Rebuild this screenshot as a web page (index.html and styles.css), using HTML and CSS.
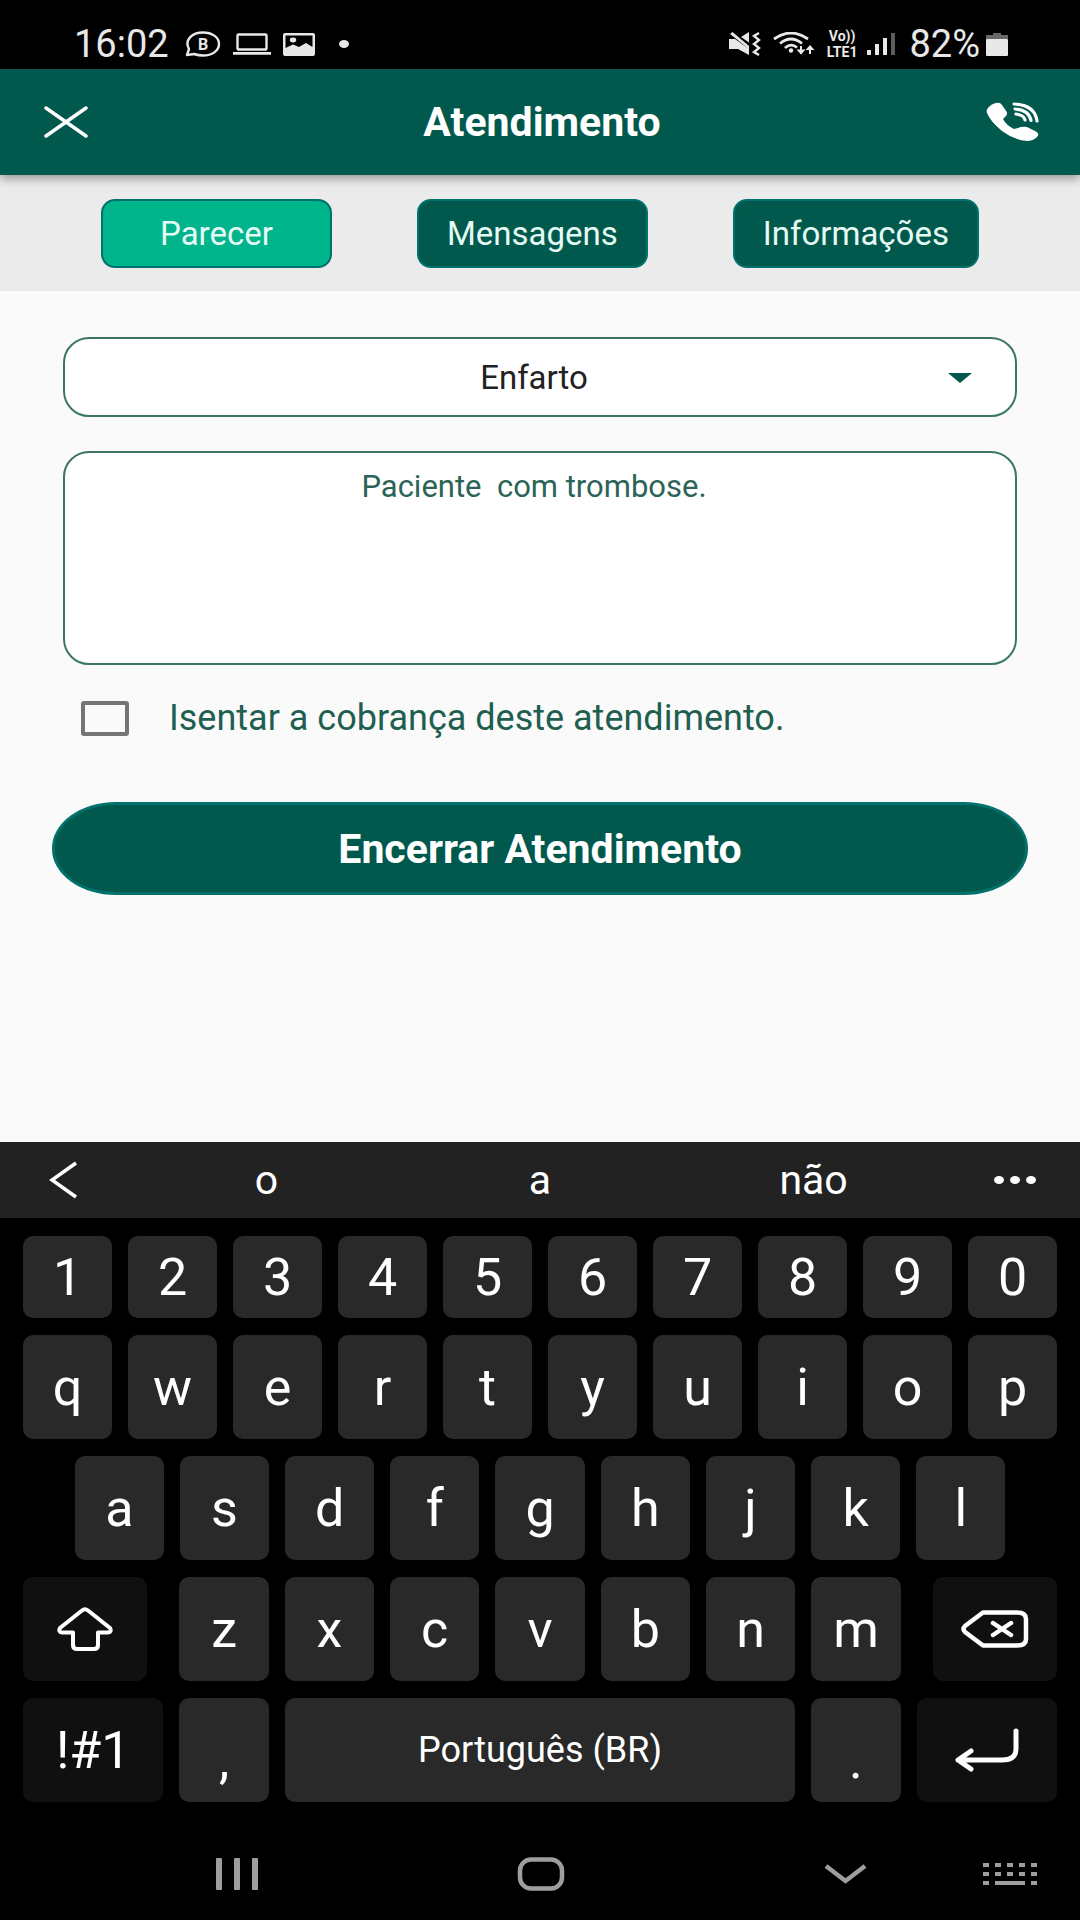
FILE: index.html
```html
<!DOCTYPE html>
<html lang="pt-BR">
<head>
    <meta charset="UTF-8">
    <meta name="viewport" content="width=device-width, initial-scale=1.0">
    <title>Atendimento</title>
    <link rel="stylesheet" href="styles.css">
</head>
<body>
    <div class="status-bar">
        <div class="status-left">
            <span class="status-text">16:02</span>
            <svg class="icon chat-icon" width="36" height="26" viewBox="0 0 36 26">
                <path d="M2 24 L4 18 C-1 9 7 1.500 18 1.500 C27 1.500 34 6 34 13 C34 20 27 24.500 18 24.500 C14 24.500 12 24 9 23 Z" fill="none" stroke="currentColor" stroke-width="2.400" stroke-linejoin="round"/>
                <text x="18" y="19" text-anchor="middle" fill="currentColor">B</text>
            </svg>
            <svg class="icon" width="38" height="22" viewBox="0 0 38 22" fill="none" stroke="currentColor" stroke-width="2.400">
                <rect x="4.500" y="1.500" width="29" height="15" rx="1"/>
                <path d="M0 20.300 H38" stroke-width="2.800"/>
            </svg>
            <svg class="icon" width="32" height="23" viewBox="0 0 32 23">
                <path fill="currentColor" fill-rule="evenodd" d="M2 0 H30 Q32 0 32 2 V21 Q32 23 30 23 H2 Q0 23 0 21 V2 Q0 0 2 0 Z M2.500 2.500 V15 L10 11.500 L16 14 L23 10 L29.500 14 V2.500 Z"/>
                <ellipse cx="10" cy="7" rx="3.200" ry="2.400" fill="currentColor"/>
            </svg>
            <span class="status-dot"></span>
        </div>
        <div class="status-right">
            <svg class="icon" width="32" height="24" viewBox="0 0 32 24">
                <path fill="currentColor" d="M0 7 H6 L20 17 V23 L9 17 H0 Z M12 5 L20 0 V10.500 Z M1 2 L3.500 0 L20 14 V17 Z"/>
                <path d="M30 1 L25 4 L30 8 L25 12 L30 16 L25 20 L30 23" fill="none" stroke="currentColor" stroke-width="2.400"/>
            </svg>
            <svg class="icon" width="42" height="24" viewBox="0 0 42 24" fill="none" stroke="currentColor" stroke-width="2.800">
                <path d="M1 7 Q18 -5 35 7 M7 11.500 Q18 2.500 29 11.500 M12 16 Q18 10.500 24 15.500"/>
                <circle cx="18" cy="18.500" r="2.200" fill="currentColor" stroke="none"/>
                <path d="M28 14 V22 M37 22 V14" stroke-width="2"/>
                <path d="M23.500 17.500 H32.500 L28 22.500 Z M32.500 18 H41.500 L37 13 Z" fill="currentColor" stroke="none"/>
            </svg>
            <span class="volte"><span>Vo))</span><span>LTE1</span></span>
            <svg class="icon signal" width="28" height="22" viewBox="0 0 28 22" fill="currentColor">
                <rect x="0" y="17" width="4" height="5"/>
                <rect x="8" y="11" width="4" height="11"/>
                <rect x="16" y="5" width="4" height="17"/>
                <rect x="24" y="0" width="4" height="22" opacity="0.4"/>
            </svg>
            <span class="status-text">82%</span>
            <svg class="icon battery" width="22" height="23" viewBox="0 0 22 23" fill="currentColor">
                <path d="M7 0 H15 V2 H22 V6 H0 V2 H7 Z" opacity="0.450"/>
                <rect x="0" y="6" width="22" height="17" rx="1"/>
            </svg>
        </div>
    </div>

    <header class="app-header">
        <button type="button" class="icon-btn" aria-label="Fechar">
            <svg class="icon" width="44" height="32" viewBox="0 0 44 32" fill="none" stroke="currentColor" stroke-width="3.500" stroke-linecap="round">
                <path d="M2 2 L42 30 M42 2 L2 30"/>
            </svg>
        </button>
        <h1>Atendimento</h1>
        <button type="button" class="icon-btn call-btn" aria-label="Ligar">
            <svg class="icon" width="54" height="40" viewBox="0 0 54 40">
                <path fill="currentColor" d="M2 6 Q5 2 10 1 Q14 0 16 3 L20.500 9.500 Q22 13 19 15 L17 17 Q20 23 28 27 L32 26 Q36 24 41 25 L50 29.500 Q54 32 51 35 Q47 39 41 39 Q28 38 16 29 Q4 19 1 11 Q0 8 2 6 Z"/>
                <path fill="none" stroke="currentColor" stroke-width="3.200" stroke-linecap="round" d="M28 2 Q49 3 51 19 M29 7 Q43 8 45 18.500 M30 12 Q38 13 39 18"/>
            </svg>
        </button>
    </header>

    <nav class="tabs">
        <button type="button" class="tab active">Parecer</button>
        <button type="button" class="tab">Mensagens</button>
        <button type="button" class="tab">Informações</button>
    </nav>

    <main class="content">
        <form class="parecer-form">
            <div class="select-wrap">
                <select id="diagnostico" name="diagnostico" aria-label="Diagnóstico">
                    <option>Enfarto</option>
                </select>
                <svg class="caret" width="24" height="10" viewBox="0 0 24 10"><path fill="currentColor" d="M0 0 H24 L12 10 Z"/></svg>
            </div>

            <textarea id="parecer" name="parecer" aria-label="Parecer" spellcheck="false">Paciente  com trombose.</textarea>

            <div class="check-row">
                <input type="checkbox" id="isentar" name="isentar">
                <label for="isentar">Isentar a cobrança deste atendimento.</label>
            </div>

            <button type="button" class="submit-btn">Encerrar Atendimento</button>
        </form>
    </main>

    <div class="suggestions">
        <button type="button" aria-label="Voltar">
            <svg class="icon" width="32" height="38" viewBox="0 0 32 38" fill="none" stroke="currentColor" stroke-width="3.500"><path d="M27 2 L3 19 L27 36"/></svg>
        </button>
        <button type="button">o</button>
        <button type="button">a</button>
        <button type="button">não</button>
        <button type="button" aria-label="Mais">
            <svg class="icon" width="42" height="10" viewBox="0 0 42 10" fill="currentColor"><ellipse cx="5" cy="5" rx="5" ry="4"/><ellipse cx="21" cy="5" rx="5" ry="4"/><ellipse cx="37" cy="5" rx="5" ry="4"/></svg>
        </button>
    </div>

    <div class="keyboard">
        <div class="row row-digits">
            <button type="button" class="key">1</button>
            <button type="button" class="key">2</button>
            <button type="button" class="key">3</button>
            <button type="button" class="key">4</button>
            <button type="button" class="key">5</button>
            <button type="button" class="key">6</button>
            <button type="button" class="key">7</button>
            <button type="button" class="key">8</button>
            <button type="button" class="key">9</button>
            <button type="button" class="key">0</button>
        </div>
        <div class="row">
            <button type="button" class="key">q</button>
            <button type="button" class="key">w</button>
            <button type="button" class="key">e</button>
            <button type="button" class="key">r</button>
            <button type="button" class="key">t</button>
            <button type="button" class="key">y</button>
            <button type="button" class="key">u</button>
            <button type="button" class="key">i</button>
            <button type="button" class="key">o</button>
            <button type="button" class="key">p</button>
        </div>
        <div class="row row-inset">
            <button type="button" class="key">a</button>
            <button type="button" class="key">s</button>
            <button type="button" class="key">d</button>
            <button type="button" class="key">f</button>
            <button type="button" class="key">g</button>
            <button type="button" class="key">h</button>
            <button type="button" class="key">j</button>
            <button type="button" class="key">k</button>
            <button type="button" class="key">l</button>
        </div>
        <div class="row">
            <button type="button" class="key key-fn key-shift" aria-label="Shift">
                <svg class="icon" width="56" height="44" viewBox="0 0 56 44" fill="none" stroke="currentColor" stroke-width="4" stroke-linejoin="round">
                    <path d="M25 3.500 Q28 1 31 3.500 L53 21 Q55 25 51 25.500 H41 V38 Q41 42 37 42 H20 Q16 42 16 38 V25.500 H5 Q1 25 3 21 Z"/>
                </svg>
            </button>
            <button type="button" class="key">z</button>
            <button type="button" class="key">x</button>
            <button type="button" class="key">c</button>
            <button type="button" class="key">v</button>
            <button type="button" class="key">b</button>
            <button type="button" class="key">n</button>
            <button type="button" class="key">m</button>
            <button type="button" class="key key-fn key-backspace" aria-label="Apagar">
                <svg class="icon" width="68" height="38" viewBox="0 0 68 38" fill="none" stroke="currentColor" stroke-width="4.500" stroke-linejoin="round" stroke-linecap="round">
                    <path d="M22 2.500 H56 Q65 2.500 65 9 V29 Q65 35.500 56 35.500 H22 L4 22 Q1 19 4 16 Z M32 13 L50 25 M50 13 L32 25"/>
                </svg>
            </button>
        </div>
        <div class="row">
            <button type="button" class="key key-fn key-wide">!#1</button>
            <button type="button" class="key key-punct">,</button>
            <button type="button" class="key key-space">Português (BR)</button>
            <button type="button" class="key key-punct">.</button>
            <button type="button" class="key key-fn key-wide" aria-label="Enter">
                <svg class="icon" width="64" height="44" viewBox="0 0 64 44" fill="none" stroke="currentColor" stroke-width="5" stroke-linejoin="round" stroke-linecap="round">
                    <path d="M61 3 V21 Q61 32 47 32 H3 M16 23 L3 32 L16 41"/>
                </svg>
            </button>
        </div>
    </div>

    <nav class="system-nav">
        <button type="button" aria-label="Recentes">
            <svg class="icon" width="42" height="32" viewBox="0 0 42 32" fill="currentColor"><rect width="6" height="32" rx="1"/><rect x="18" width="6" height="32" rx="1"/><rect x="36" width="6" height="32" rx="1"/></svg>
        </button>
        <button type="button" aria-label="Início">
            <svg class="icon" width="48" height="34" viewBox="0 0 48 34" fill="none" stroke="currentColor" stroke-width="4.500"><rect x="3" y="2.500" width="42" height="29" rx="11"/></svg>
        </button>
        <button type="button" aria-label="Ocultar teclado">
            <svg class="icon" width="43" height="20" viewBox="0 0 43 20" fill="none" stroke="currentColor" stroke-width="4.500"><path d="M2 2 L21.500 17 L41 2"/></svg>
        </button>
        <button type="button" aria-label="Teclados">
            <svg class="icon" width="54" height="22" viewBox="0 0 54 22" fill="none" stroke="currentColor" stroke-width="4">
                <path d="M0 2 H54 M0 11 H54" stroke-dasharray="6 6"/>
                <path d="M0 20 H6 M12 20 H42 M48 20 H54"/>
            </svg>
        </button>
    </nav>
</body>
</html>
```
FILE: styles.css
```css
:root {
    --primary-color: #00594c;
    --active-color: #00b48c;
    --border-color: #3c7468;
    --button-border: #00716c;
    --background-color: #fafafa;
    --key-color: #292929;
    --key-fn-color: #101010;
}

* {
    box-sizing: border-box;
}

body {
    margin: 0;
    min-height: 100vh;
    display: flex;
    flex-direction: column;
    font-family: Roboto, 'Liberation Sans', sans-serif;
    background-color: var(--background-color);
}

button {
    font-family: inherit;
    border: none;
    padding: 0;
    background: none;
    color: inherit;
    cursor: pointer;
}

.icon {
    display: block;
    flex: none;
}

/* Status bar */
.status-bar {
    display: flex;
    justify-content: space-between;
    height: 69px;
    padding: 20px 72px 0 74px;
    background: #000;
    color: #e8e8e8;
}

.status-left,
.status-right {
    display: flex;
    align-items: center;
    height: 48px;
    gap: 12px;
}

.status-text {
    font-size: 38px;
    line-height: 48px;
}

.chat-icon {
    margin-left: 4px;
    font-size: 16px;
    font-weight: bold;
}

.status-dot {
    width: 10px;
    height: 8px;
    margin-left: 12px;
    border-radius: 50%;
    background: currentColor;
}

.volte {
    display: flex;
    flex-direction: column;
    align-items: center;
    font-size: 14px;
    font-weight: bold;
    line-height: 16px;
}

.signal {
    margin: 0 2px 0 -2px;
}

.battery {
    margin-left: -6px;
}

/* Header */
.app-header {
    position: relative;
    display: grid;
    grid-template-columns: 1fr auto 1fr;
    align-items: center;
    height: 106px;
    padding: 0 40px 0 44px;
    background: var(--primary-color);
    color: #fff;
    box-shadow: 0 3px 10px rgba(0, 0, 0, 0.4);
}

.app-header h1 {
    margin: 0;
    font-size: 41px;
    line-height: 48px;
}

.icon-btn {
    justify-self: start;
}

.call-btn {
    justify-self: end;
}

/* Tabs */
.tabs {
    display: flex;
    justify-content: space-between;
    padding: 24px 101px 23px;
    background: #ebebeb;
}

.tab {
    min-width: 231px;
    height: 69px;
    padding: 0 28px;
    border: 2px solid var(--button-border);
    border-radius: 14px;
    background: var(--primary-color);
    color: #e6faf5;
    font-size: 33px;
}

.tab.active {
    background: var(--active-color);
}

/* Form */
.content {
    flex: 1;
    padding: 46px 52px;
}

.parecer-form {
    display: flex;
    flex-direction: column;
}

.select-wrap {
    position: relative;
    margin: 0 11px 34px;
}

select,
textarea {
    display: block;
    width: 100%;
    border: 2px solid var(--border-color);
    border-radius: 26px;
    background: #fff;
    font-family: inherit;
    font-size: 33px;
    text-align: center;
    outline: none;
}

select {
    appearance: none;
    height: 80px;
    padding: 0 24px 0 12px;
    color: #222;
    text-align-last: center;
}

.caret {
    position: absolute;
    top: 36px;
    right: 45px;
    color: var(--primary-color);
    pointer-events: none;
}

textarea {
    width: auto;
    height: 214px;
    margin: 0 11px 36px;
    padding: 14px 24px 14px 12px;
    color: #2b6457;
    font-size: 31px;
    line-height: 40px;
    resize: none;
}

.check-row {
    display: flex;
    align-items: center;
    gap: 40px;
    margin: 0 29px 66px;
}

.check-row input {
    appearance: none;
    flex: none;
    width: 48px;
    height: 35px;
    margin: 0;
    border: 4px solid #757575;
    border-radius: 3px;
}

.check-row label {
    color: #1f5f51;
    font-size: 36px;
    line-height: 35px;
}

.submit-btn {
    height: 93px;
    border: 3px solid var(--button-border);
    border-radius: 64px / 46px;
    background: var(--primary-color);
    color: #fff;
    font-size: 41px;
    font-weight: bold;
}

/* Keyboard */
.suggestions {
    display: grid;
    grid-template-columns: 12% 1fr 1fr 1fr 12%;
    height: 76px;
    background: #222;
    color: #fff;
}

.suggestions button {
    display: flex;
    align-items: center;
    justify-content: center;
    font-size: 41px;
}

.keyboard {
    display: flex;
    flex-direction: column;
    gap: 17px;
    padding: 18px 23px 26px;
    background: #000;
    color: #fff;
}

.row {
    display: flex;
    gap: 16px;
    height: 104px;
}

.row-digits {
    height: 82px;
}

.row-inset {
    padding: 0 5%;
}

.key {
    display: flex;
    flex: 89 1 0;
    align-items: center;
    justify-content: center;
    min-width: 0;
    border-radius: 10px;
    background: var(--key-color);
    font-size: 52px;
}

.key-fn {
    flex-grow: 124;
    background: var(--key-fn-color);
}

.key-shift {
    margin-right: 16px;
}

.key-backspace {
    margin-left: 16px;
}

.key-wide {
    flex-grow: 140;
}

.key-punct {
    padding-top: 20px;
}

.key-space {
    flex-grow: 509;
    font-size: 36px;
}

/* Android navigation */
.system-nav {
    display: flex;
    align-items: center;
    height: 92px;
    padding: 0 43px 0 20%;
    background: #000;
    color: #9e9e9e;
}

.system-nav button {
    margin-right: 24vw;
}

.system-nav button:nth-child(3) {
    margin-right: auto;
}

.system-nav button:last-child {
    margin-right: 0;
}
```
